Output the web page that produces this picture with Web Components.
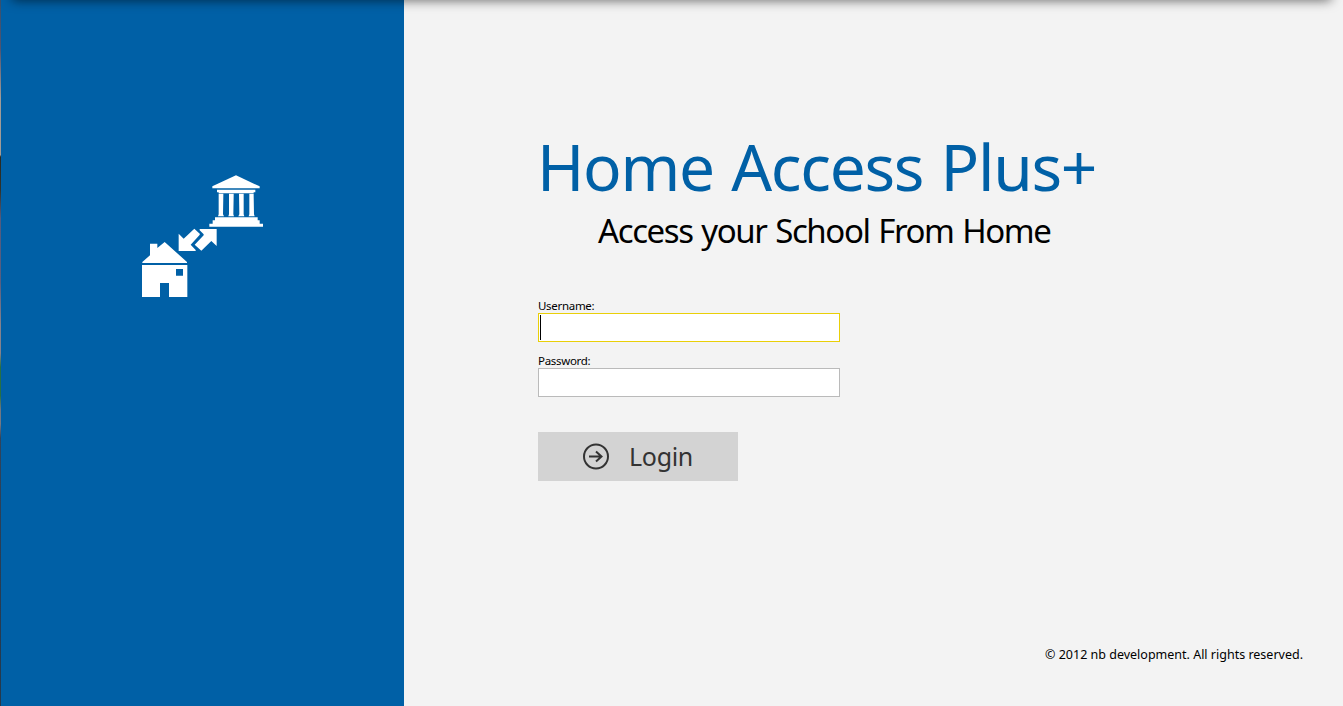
<!DOCTYPE html>
<html lang="en">
<head>
<meta charset="utf-8">
<title>Home Access Plus+</title>
<style>
html, body { margin: 0; height: 100%; overflow: hidden; }
body { font-family: "Noto Sans", "Open Sans", sans-serif; color: #000; background: #f3f3f3; }
</style>
</head>
<body>
<login-page></login-page>
<script>
const define = (name, html) => customElements.define(name, class extends HTMLElement {
  constructor() {
    super();
    const t = document.createElement('template');
    t.innerHTML = html;
    this.attachShadow({ mode: 'open' }).append(t.content.cloneNode(true));
  }
});

define('brand-logo', `<style>:host{display:block;width:145px;height:140px}svg{display:block}</style>
<svg width="145" height="140" viewBox="0 0 435 420" fill="#fff">
  <path d="M318 31L389 64V70H247V64Z"/>
  <path d="M261 74H376V82H371V85H266V82H261Z"/>
  <path d="M266 86H280V92L279 148L282 154H264L266 148ZM297 86H311V92L310 148L312 154H295L297 148ZM327 86H341V92L341 148L343 154H325L328 148ZM358 86H371V92L372 148L374 154H356L358 148Z"/>
  <path d="M255 157H383V166H389V176H399V185H238V176H248V166H255Z"/>
  <path d="M146 206L161 221L193 191L210 207L208 211L182 239L197 255V258H146Z"/>
  <path d="M209 192H260V243L244 228L214 257L194 239L221 211V208L209 196Z"/>
  <path d="M60 236H82V249L104 231L171 291V294H37V291L60 271Z"/>
  <path fill-rule="evenodd" d="M36 300H172V396H117V354H90V396H36ZM138 312V332H159V312Z"/>
</svg>`);

define('side-panel', `<style>
:host{display:flex;box-sizing:border-box;width:404px;flex:none;padding:165px 0 0 129px;background:#0060a6;
border-left:1px solid;border-image:linear-gradient(#36516f 0,#505470 7%,#a29b96 14%,#a29b96 22%,#292a22 22.3%,#30332c 27%,#555b7e 31%,#595e80 40%,#85828c 46%,#85828c 50%,#287044 52%,#287044 56%,#717780 58%,#777984 60%,#32445b 62%,#293d54 80%,#25394c 100%) 1}
</style><slot></slot>`);

define('page-title', `<style>
:host{display:block}
h1,p{margin:0;font-weight:400;white-space:nowrap}
h1{font-size:64px;line-height:80px;letter-spacing:-1.3px;word-spacing:2px;color:#0060a6;margin-left:-1px}
p{font-size:33px;line-height:44px;padding-left:60px;margin-top:2px;letter-spacing:-1.4px;word-spacing:1.5px}
</style><h1><slot name="title"></slot></h1><p><slot name="subtitle"></slot></p>`);

define('text-field', `<style>
:host{display:block;width:302px;--edge:#bababa}
:host([active]){--edge:#e9cf08}
label{display:block;font-size:11.5px;line-height:15px;height:15px;letter-spacing:-.3px}
.box{box-sizing:border-box;height:29px;border:1px solid var(--edge);background:#fff;padding:1px}
:host([active]) .box::before{content:"";display:block;width:1px;height:25px;background:#000}
</style><label><slot></slot></label><div class="box"></div>`);

define('login-button', `<style>
:host{display:block}
button{display:flex;align-items:center;box-sizing:border-box;width:200px;height:49px;border:0;padding:0 0 0 44px;background:#d3d3d3;color:#333;font:400 25px/49px "Noto Sans",sans-serif;letter-spacing:-.3px}
svg{width:28px;height:28px;margin-right:19px}
</style><button><svg viewBox="0 0 28 28" fill="none" stroke="#333" stroke-width="2"><circle cx="14" cy="13.5" r="12"/><path d="M7 13.5H19.5M14 8.5L19.5 13.5L14 18.5"/></svg><slot></slot></button>`);

define('page-footer', `<style>
:host{display:block;font-size:12.5px;line-height:18px;text-align:right;white-space:nowrap}
</style><slot></slot>`);

define('login-page', `<style>
:host{display:flex;position:relative;width:100%;height:100vh;overflow:hidden;background:#f3f3f3}
.shade{position:absolute;left:12px;right:12px;top:-10px;height:10px;box-shadow:0 0 12px rgba(0,0,0,.65)}
main{flex:1;display:flex;flex-direction:column;box-sizing:border-box;padding:127px 40px 42px 134px}
form{margin:45px 0 0;display:flex;flex-direction:column;gap:11px}
login-button{margin-top:24px}
page-footer{margin-top:auto}
</style>
<side-panel><brand-logo></brand-logo></side-panel>
<main>
<page-title><span slot="title">Home Access Plus+</span><span slot="subtitle">Access your School From Home</span></page-title>
<form><text-field active>Username:</text-field><text-field>Password:</text-field><login-button>Login</login-button></form>
<page-footer>© 2012 nb development. All rights reserved.</page-footer>
</main><div class="shade"></div>`);
</script>
</body>
</html>
